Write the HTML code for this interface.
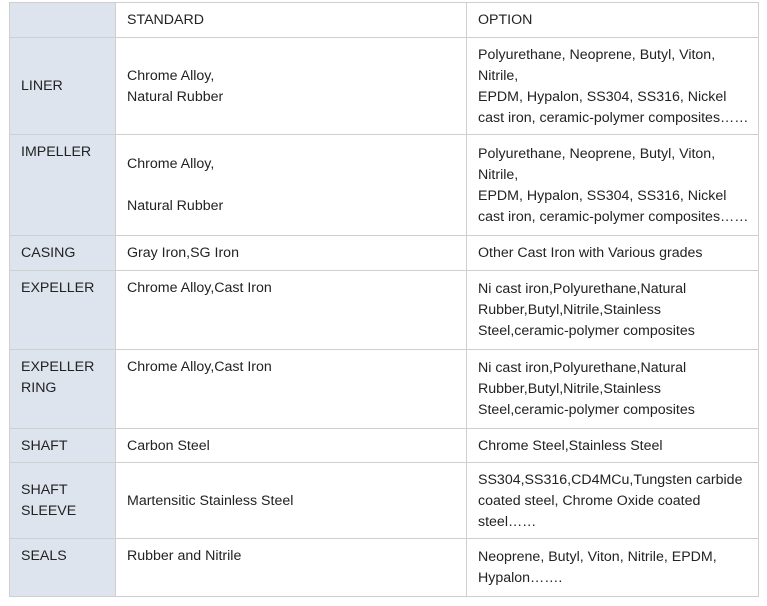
<!DOCTYPE html>
<html><head><style>
body{margin:0;width:767px;height:606px;background:#fff;position:relative;overflow:hidden;font-family:"Liberation Sans",Arial,sans-serif;font-size:14.2px;color:#222}
.c{position:absolute;background:#dde4ee}
.h{position:absolute;left:9px;width:750px;height:1px;background:#cfcfcf}
.v{position:absolute;top:2px;height:595px;width:1px;background:#cfcfcf}
.t{position:absolute;line-height:21px;white-space:nowrap;margin-top:1.5px}
</style></head><body>
<div class="c" style="left:9px;top:2px;width:106px;height:595px"></div>
<div class="h" style="top:2px"></div><div class="h" style="top:37px"></div><div class="h" style="top:134px"></div><div class="h" style="top:235px"></div><div class="h" style="top:270px"></div><div class="h" style="top:349px"></div><div class="h" style="top:428px"></div><div class="h" style="top:462px"></div><div class="h" style="top:538px"></div><div class="h" style="top:596px"></div>
<div class="v" style="left:9px"></div><div class="v" style="left:115px"></div><div class="v" style="left:466px"></div><div class="v" style="left:758px"></div>

<div class="t" style="left:127px;top:8px">STANDARD</div>
<div class="t" style="left:478px;top:8px">OPTION</div>

<div class="t" style="left:21px;top:74px">LINER</div>
<div class="t" style="left:127px;top:64px">Chrome Alloy,<br>Natural Rubber</div>
<div class="t" style="left:478px;top:43px">Polyurethane, Neoprene, Butyl, Viton,<br>Nitrile,<br>EPDM, Hypalon, SS304, SS316, Nickel<br>cast iron, ceramic-polymer composites……</div>

<div class="t" style="left:21px;top:140px">IMPELLER</div>
<div class="t" style="left:127px;top:152px">Chrome Alloy,</div>
<div class="t" style="left:127px;top:194px">Natural Rubber</div>
<div class="t" style="left:478px;top:142px">Polyurethane, Neoprene, Butyl, Viton,<br>Nitrile,<br>EPDM, Hypalon, SS304, SS316, Nickel<br>cast iron, ceramic-polymer composites……</div>

<div class="t" style="left:21px;top:241px">CASING</div>
<div class="t" style="left:127px;top:241px">Gray Iron,SG Iron</div>
<div class="t" style="left:478px;top:241px">Other Cast Iron with Various grades</div>

<div class="t" style="left:21px;top:276px">EXPELLER</div>
<div class="t" style="left:127px;top:276px">Chrome Alloy,Cast Iron</div>
<div class="t" style="left:478px;top:277px">Ni cast iron,Polyurethane,Natural<br>Rubber,Butyl,Nitrile,Stainless<br>Steel,ceramic-polymer composites</div>

<div class="t" style="left:21px;top:355px">EXPELLER<br>RING</div>
<div class="t" style="left:127px;top:355px">Chrome Alloy,Cast Iron</div>
<div class="t" style="left:478px;top:356px">Ni cast iron,Polyurethane,Natural<br>Rubber,Butyl,Nitrile,Stainless<br>Steel,ceramic-polymer composites</div>

<div class="t" style="left:21px;top:434px">SHAFT</div>
<div class="t" style="left:127px;top:434px">Carbon Steel</div>
<div class="t" style="left:478px;top:434px">Chrome Steel,Stainless Steel</div>

<div class="t" style="left:21px;top:478px">SHAFT<br>SLEEVE</div>
<div class="t" style="left:127px;top:489px">Martensitic Stainless Steel</div>
<div class="t" style="left:478px;top:468px">SS304,SS316,CD4MCu,Tungsten carbide<br>coated steel, Chrome Oxide coated<br>steel……</div>

<div class="t" style="left:21px;top:544px">SEALS</div>
<div class="t" style="left:127px;top:544px">Rubber and Nitrile</div>
<div class="t" style="left:478px;top:545px">Neoprene, Butyl, Viton, Nitrile, EPDM,<br>Hypalon…….</div>
</body></html>
